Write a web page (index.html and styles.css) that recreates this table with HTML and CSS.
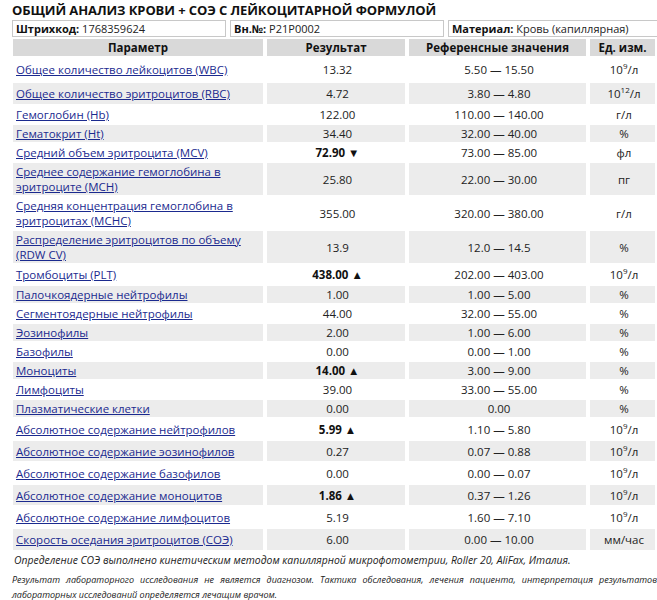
FILE: index.html
```html
<!DOCTYPE html>
<html lang="ru">
<head>
<meta charset="utf-8">
<link rel="stylesheet" href="styles.css">
</head>
<body>
<div class="page">
  <h1 class="title">ОБЩИЙ АНАЛИЗ КРОВИ + СОЭ С ЛЕЙКОЦИТАРНОЙ ФОРМУЛОЙ</h1>
  <div class="info">
    <div class="info-box box-code"><b>Штрихкод:</b> 1768359624</div>
    <div class="info-box box-num"><b>Вн.№:</b> P21P0002</div>
    <div class="info-box box-mat"><b>Материал:</b> Кровь (капиллярная)</div>
  </div>
  <table class="results">
    <thead>
      <tr><th class="c-param">Параметр</th><th class="c-res">Результат</th><th class="c-ref">Референсные значения</th><th class="c-unit">Ед. изм.</th></tr>
    </thead>
    <tbody>
      <tr class="first"><td><a href="#">Общее количество лейкоцитов (WBC)</a></td><td>13.32</td><td>5.50 — 15.50</td><td>10<sup>9</sup>/л</td></tr>
      <tr class="alt second"><td><a href="#">Общее количество эритроцитов (RBC)</a></td><td>4.72</td><td>3.80 — 4.80</td><td>10<sup>12</sup>/л</td></tr>
      <tr><td><a href="#">Гемоглобин (Hb)</a></td><td>122.00</td><td>110.00 — 140.00</td><td>г/л</td></tr>
      <tr class="alt"><td><a href="#">Гематокрит (Ht)</a></td><td>34.40</td><td>32.00 — 40.00</td><td>%</td></tr>
      <tr><td><a href="#">Средний объем эритроцита (MCV)</a></td><td><b>72.90 ▼</b></td><td>73.00 — 85.00</td><td>фл</td></tr>
      <tr class="alt"><td><a href="#">Среднее содержание гемоглобина в эритроците (MCH)</a></td><td>25.80</td><td>22.00 — 30.00</td><td>пг</td></tr>
      <tr><td><a href="#">Средняя концентрация гемоглобина в эритроцитах (MCHC)</a></td><td>355.00</td><td>320.00 — 380.00</td><td>г/л</td></tr>
      <tr class="alt"><td><a href="#">Распределение эритроцитов по объему (RDW CV)</a></td><td>13.9</td><td>12.0 — 14.5</td><td>%</td></tr>
      <tr class="mid"><td><a href="#">Тромбоциты (PLT)</a></td><td><b>438.00 ▲</b></td><td>202.00 — 403.00</td><td>10<sup>9</sup>/л</td></tr>
      <tr class="alt"><td><a href="#">Палочкоядерные нейтрофилы</a></td><td>1.00</td><td>1.00 — 5.00</td><td>%</td></tr>
      <tr><td><a href="#">Сегментоядерные нейтрофилы</a></td><td>44.00</td><td>32.00 — 55.00</td><td>%</td></tr>
      <tr class="alt"><td><a href="#">Эозинофилы</a></td><td>2.00</td><td>1.00 — 6.00</td><td>%</td></tr>
      <tr><td><a href="#">Базофилы</a></td><td>0.00</td><td>0.00 — 1.00</td><td>%</td></tr>
      <tr class="alt"><td><a href="#">Моноциты</a></td><td><b>14.00 ▲</b></td><td>3.00 — 9.00</td><td>%</td></tr>
      <tr><td><a href="#">Лимфоциты</a></td><td>39.00</td><td>33.00 — 55.00</td><td>%</td></tr>
      <tr class="alt"><td><a href="#">Плазматические клетки</a></td><td>0.00</td><td>0.00</td><td>%</td></tr>
      <tr class="tall"><td><a href="#">Абсолютное содержание нейтрофилов</a></td><td><b>5.99 ▲</b></td><td>1.10 — 5.80</td><td>10<sup>9</sup>/л</td></tr>
      <tr class="alt tall"><td><a href="#">Абсолютное содержание эозинофилов</a></td><td>0.27</td><td>0.07 — 0.88</td><td>10<sup>9</sup>/л</td></tr>
      <tr class="tall"><td><a href="#">Абсолютное содержание базофилов</a></td><td>0.00</td><td>0.00 — 0.07</td><td>10<sup>9</sup>/л</td></tr>
      <tr class="alt tall"><td><a href="#">Абсолютное содержание моноцитов</a></td><td><b>1.86 ▲</b></td><td>0.37 — 1.26</td><td>10<sup>9</sup>/л</td></tr>
      <tr class="tall"><td><a href="#">Абсолютное содержание лимфоцитов</a></td><td>5.19</td><td>1.60 — 7.10</td><td>10<sup>9</sup>/л</td></tr>
      <tr class="alt last"><td><a href="#">Скорость оседания эритроцитов (СОЭ)</a></td><td>6.00</td><td>0.00 — 10.00</td><td>мм/час</td></tr>
    </tbody>
  </table>
  <p class="note">Определение СОЭ выполнено кинетическим методом капиллярной микрофотометрии, Roller 20, AliFax, Италия.</p>
  <p class="disclaimer">Результат лабораторного исследования не является диагнозом. Тактика обследования, лечения пациента, интерпретация результатов лабораторных исследований определяется лечащим врачом.</p>
</div>
</body>
</html>
```

FILE: styles.css
```css
html, body {
  margin: 0;
  padding: 0;
  overflow: hidden;
  background: #fff;
}
body {
  font-family: "Open Sans", "Noto Sans", sans-serif;
  color: #222;
  font-size: 11.5px;
}
.page {
  padding: 2px 0 0 12px;
  width: 645px;
}
.title {
  margin: 0;
  font-size: 13px;
  font-weight: 700;
  line-height: 17px;
  letter-spacing: -0.1px;
  color: #111;
  white-space: nowrap;
}
.info {
  display: flex;
  gap: 4px;
  margin-top: 1px;
  width: 660px;
}
.info-box {
  border: 1px solid #c8c8c8;
  height: 15px;
  line-height: 15px;
  padding: 0 3px;
  font-size: 11px;
  color: #222;
  box-sizing: content-box;
  white-space: nowrap;
}
.info-box b { color: #111; }
.box-code { width: 206px; }
.box-num { width: 206px; }
.box-mat { flex: 1; }
.results {
  border-collapse: separate;
  border-spacing: 4px 2px;
  margin: 0 0 0 -3px;
  width: 650px;
}
.results th {
  background: #d9d9d9;
  font-weight: 700;
  font-size: 11.5px;
  height: 17px;
  padding: 0;
  color: #111;
}
.c-param { width: 250px; }
.c-res { width: 138px; }
.c-ref { width: 177px; }
.c-unit { width: 65px; }
.results td {
  padding: 1px 0 1px 3px;
  line-height: 15px;
  text-align: center;
  vertical-align: middle;
}
.results td:first-child {
  text-align: left;
  padding-left: 3px;
}
.results tr.alt td { background: #ececec; }
.results tr.first td { height: 21px; }
.results tr.second td { height: 19px; }
.results tr.tall td { height: 18px; }
.results tr.mid td { height: 17px; }
.results tr.last td { height: 19px; }
.results a {
  color: #1b2a8f;
  text-decoration: underline;
}
.results b { color: #111; }
sup {
  font-size: 8px;
  line-height: 0;
  vertical-align: 5px;
}
.note {
  margin: 1px 0 0 2px;
  font-style: italic;
  font-size: 10.4px;
  line-height: 14px;
  white-space: nowrap;
}
.disclaimer {
  margin: 5px 0 0 0;
  font-style: italic;
  font-size: 9px;
  line-height: 15px;
  text-align: justify;
  width: 645px;
}
```
